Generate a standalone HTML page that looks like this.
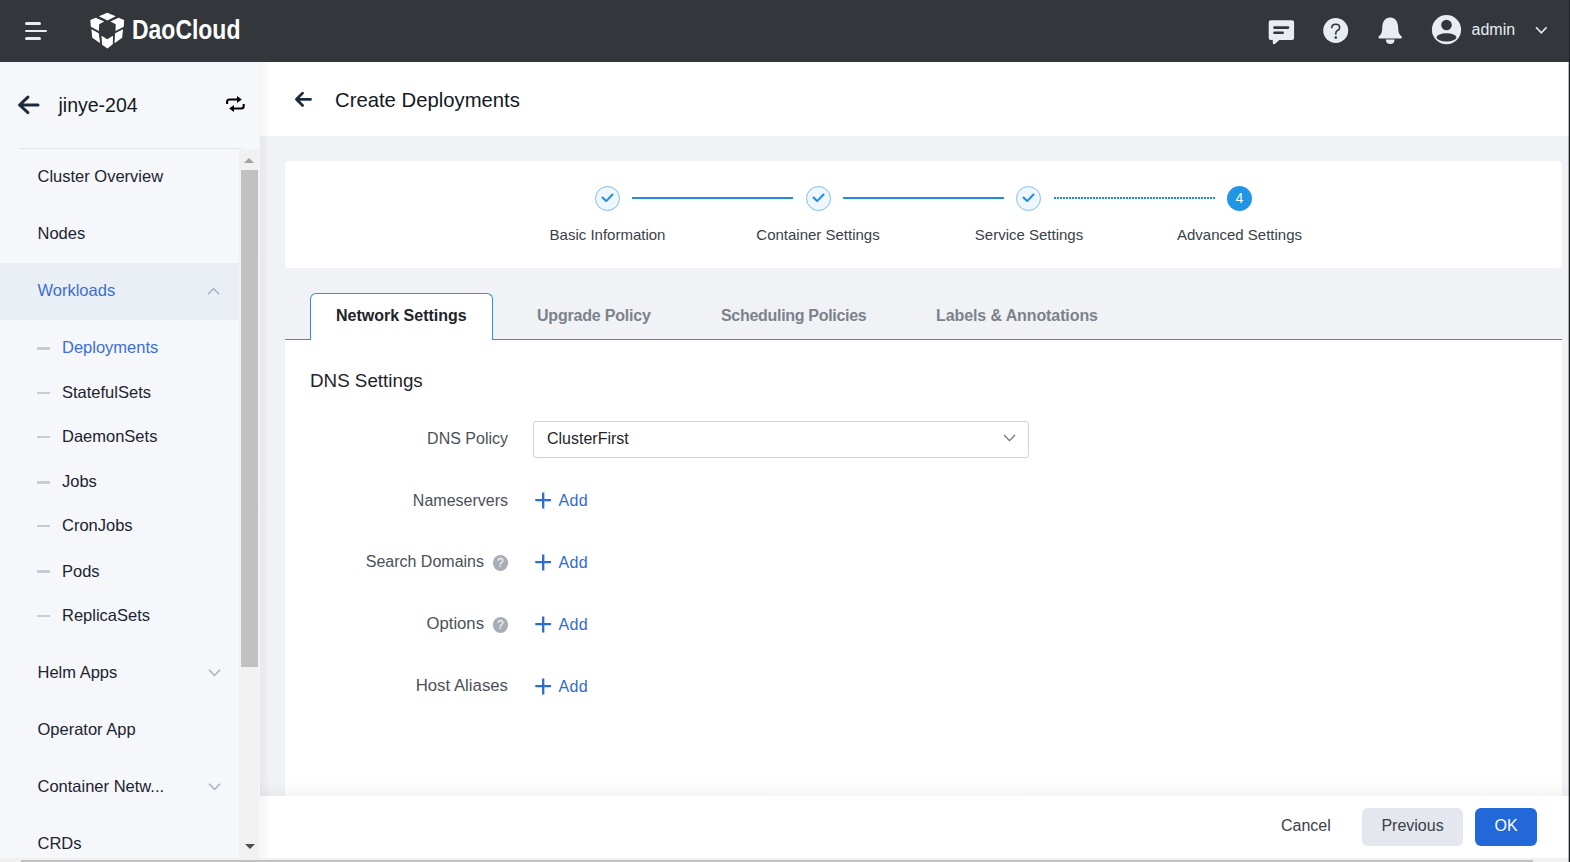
<!DOCTYPE html>
<html><head><meta charset="utf-8">
<style>
*{box-sizing:border-box;margin:0;padding:0}
html,body{width:1570px;height:862px;overflow:hidden;background:#f1f2f5;font-family:"Liberation Sans",sans-serif}
.abs{position:absolute}
.t{position:absolute;white-space:nowrap;line-height:1}
svg{position:absolute;overflow:visible}
#hdr{left:0;top:0;width:1570px;height:62px;background:#33363b}
#side{left:0;top:62px;width:260px;height:800px;background:#f6f7fa}
#mainhdr{left:260px;top:62px;width:1309px;height:74px;background:#fff}
#redge{left:1568px;top:0;width:2px;height:862px;background:#3a3d42}
#card1{left:285px;top:161px;width:1277px;height:107px;background:#fff;border-radius:4px}
#content{left:285px;top:339px;width:1277px;height:457px;background:#fff}
#footer{left:260px;top:796px;width:1309px;height:66px;background:#fff}
.hb{position:absolute;background:#e8ecf3;border-radius:2px}
.mi{font-size:16.5px;color:#1c2330}
.sub{font-size:16.5px;color:#1c2330}
.dash{position:absolute;left:37px;width:13px;height:2px;background:#c8ccd4}
.chev{position:absolute}
.step{font-size:15px;color:#3b4048}
.circ{position:absolute;width:25px;height:25px;border-radius:50%;background:#eef6fe;border:1px solid #80bff0}
.tab{font-size:16px;font-weight:bold;color:#7c828c}
.lbl{font-size:16px;color:#4b5058;text-align:right}
.add{font-size:16px;color:#2d6bd5;letter-spacing:0.3px}
.q{position:absolute;width:15.5px;height:15.5px;border-radius:50%;background:#a9adb5;color:#fff;font-size:12px;line-height:16px;text-align:center}
</style></head><body>
<div id="hdr" class="abs"></div>
<div id="side" class="abs"></div>
<div id="mainhdr" class="abs"></div>
<div id="card1" class="abs"></div>
<div id="content" class="abs"></div>
<div id="footer" class="abs"></div>

<!-- header -->
<div class="hb" style="left:25px;top:22px;width:16px;height:3px"></div>
<div class="hb" style="left:25px;top:30px;width:22px;height:2px"></div>
<div class="hb" style="left:25px;top:37px;width:16px;height:3px"></div>
<svg style="left:86px;top:10px" width="44" height="42" viewBox="0 0 903 862">
<g fill="#fff">
<polygon points="265,130 435,58 610,130 440,215"/>
<polygon points="88,205 200,160 372,238 270,290 265,432 100,345"/>
<polygon points="500,238 668,160 782,205 775,345 605,432 610,295"/>
<polygon points="110,395 262,478 290,682 130,572"/>
<polygon points="760,395 598,478 585,682 742,572"/>
<polygon points="318,530 437,600 555,530 550,705 440,790 330,712"/>
</g></svg>
<div class="t" style="left:132px;top:15.6px;font-size:27.5px;font-weight:bold;color:#fff;transform:scaleX(0.835);transform-origin:0 0">DaoCloud</div>

<!-- right header icons -->
<svg style="left:1268px;top:19px" width="27" height="26" viewBox="0 0 27 26">
<path d="M3 1.2 H24 Q26.1 1.2 26.1 3.3 V18.9 Q26.1 21 24 21 H11.4 L6.8 24.9 Q5 26 4.8 24 V21 H2.8 Q0.7 21 0.7 18.9 V3.3 Q0.7 1.2 2.8 1.2Z" fill="#e8ecf3"/>
<rect x="5.2" y="7.3" width="16.1" height="2.6" rx="1.3" fill="#33363b"/>
<rect x="5.2" y="12.4" width="10.8" height="2.6" rx="1.3" fill="#33363b"/>
</svg>
<svg style="left:1323px;top:18px" width="26" height="26" viewBox="0 0 26 26">
<circle cx="12.7" cy="12.5" r="12.5" fill="#e8ecf3"/>
<path d="M8.8 9.6 Q8.8 6.2 12.7 6.2 Q16.6 6.2 16.6 9.4 Q16.6 11.5 14.4 12.6 Q12.8 13.4 12.8 15.4 V16" fill="none" stroke="#33363b" stroke-width="1.65" stroke-linecap="round"/>
<circle cx="12.8" cy="19.6" r="1.3" fill="#33363b"/>
</svg>
<svg style="left:1378px;top:17px" width="25" height="28" viewBox="0 0 25 28">
<path d="M12.2 0.6 C6.8 0.6 4.6 5 4.3 10 L4 14 C3.8 17 1.6 18.4 0.6 19.8 Q0 21.5 1.6 21.5 H22.8 Q24.4 21.5 23.8 19.8 C22.8 18.4 20.6 17 20.4 14 L20.1 10 C19.8 5 17.6 0.6 12.2 0.6Z" fill="#e8ecf3"/>
<path d="M7.9 22.6 H16.5 Q16.5 27.1 12.2 27.1 Q7.9 27.1 7.9 22.6Z" fill="#e8ecf3"/>
</svg>
<svg style="left:1431px;top:15px" width="30" height="30" viewBox="0 0 30 30">
<circle cx="15.5" cy="14.7" r="14.6" fill="#e8ecf3"/>
<circle cx="15.5" cy="10" r="5.3" fill="#33363b"/>
<ellipse cx="15.5" cy="22.4" rx="9.9" ry="4.2" fill="#33363b"/>
</svg>
<div class="t" style="left:1471.5px;top:22px;font-size:16px;color:#e8ecf3">admin</div>
<svg style="left:1535px;top:26px" width="13" height="9" viewBox="0 0 13 9">
<path d="M1 1.2 L6.3 6.8 L11.6 1.2" fill="none" stroke="#e8ecf3" stroke-width="1.6"/>
</svg>

<!-- sidebar -->
<svg style="left:16px;top:94px" width="24" height="22" viewBox="0 0 24 22">
<path d="M11.9 3.1 L3.6 11 L11.9 18.6 M3.6 11 H22" fill="none" stroke="#1b2a3b" stroke-width="3" stroke-linecap="round" stroke-linejoin="round"/>
</svg>
<div class="t" style="left:58.5px;top:95.8px;font-size:19.5px;color:#14181f">jinye-204</div>
<svg style="left:224px;top:94px" width="24" height="20" viewBox="0 0 24 20">
<path d="M3.1 9.9 V8 Q3.1 5.5 5.6 5.5 H14" fill="none" stroke="#000" stroke-width="2.1"/>
<polygon points="13,2 17.8,5.5 13,9" fill="#000"/>
<path d="M19.7 10 V12 Q19.7 14.5 17.2 14.5 H9" fill="none" stroke="#000" stroke-width="2.1"/>
<polygon points="10,11 5.2,14.5 10,18" fill="#000"/>
</svg>
<div class="abs" style="left:19px;top:148px;width:222px;height:1px;background:#dfe2e8"></div>

<div class="t mi" style="left:37.5px;top:168.4px">Cluster Overview</div>
<div class="t mi" style="left:37.5px;top:225.4px">Nodes</div>
<div class="abs" style="left:0;top:263px;width:239px;height:57px;background:#eaeef5"></div>
<div class="t mi" style="left:37.5px;top:282.2px;color:#3b6fd6">Workloads</div>
<svg style="left:207px;top:286px" width="13" height="10" viewBox="0 0 13 10">
<path d="M1 8.2 L6.5 2.5 L12 8.2" fill="none" stroke="#a9b0bc" stroke-width="1.5"/>
</svg>

<div class="dash" style="top:347px;height:3px"></div>
<div class="t sub" style="left:62px;top:339.3px;color:#3b6fd6">Deployments</div>
<div class="dash" style="top:392px"></div>
<div class="t sub" style="left:62px;top:384px">StatefulSets</div>
<div class="dash" style="top:436px"></div>
<div class="t sub" style="left:62px;top:428.2px">DaemonSets</div>
<div class="dash" style="top:480.5px;height:3px"></div>
<div class="t sub" style="left:62px;top:473px">Jobs</div>
<div class="dash" style="top:525px"></div>
<div class="t sub" style="left:62px;top:517.4px">CronJobs</div>
<div class="dash" style="top:569.5px;height:3px"></div>
<div class="t sub" style="left:62px;top:562.6px">Pods</div>
<div class="dash" style="top:615px"></div>
<div class="t sub" style="left:62px;top:607.4px">ReplicaSets</div>

<div class="t mi" style="left:37.5px;top:664.4px">Helm Apps</div>
<svg style="left:208px;top:668px" width="13" height="10" viewBox="0 0 13 10">
<path d="M1 1.8 L6.5 7.5 L12 1.8" fill="none" stroke="#a9b0bc" stroke-width="1.5"/>
</svg>
<div class="t mi" style="left:37.5px;top:721.2px">Operator App</div>
<div class="t mi" style="left:37.5px;top:778px">Container Netw...</div>
<svg style="left:208px;top:782px" width="13" height="10" viewBox="0 0 13 10">
<path d="M1 1.8 L6.5 7.5 L12 1.8" fill="none" stroke="#a9b0bc" stroke-width="1.5"/>
</svg>
<div class="t mi" style="left:37.5px;top:835px">CRDs</div>

<!-- sidebar scrollbar -->
<div class="abs" style="left:239px;top:149px;width:20px;height:709px;background:#f1f1f1"></div>
<div class="abs" style="left:241px;top:170px;width:17px;height:497px;background:#c1c1c1"></div>
<svg style="left:244px;top:157.5px" width="10" height="6" viewBox="0 0 10 6"><polygon points="0,5 5,0 10,5" fill="#a3a3a3"/></svg>
<svg style="left:244.7px;top:843.6px" width="10" height="6" viewBox="0 0 10 6"><polygon points="0,0 10,0 5,5" fill="#505050"/></svg>

<!-- main header -->
<div class="abs" style="left:260px;top:62px;width:10px;height:800px;background:linear-gradient(to right,rgba(0,0,0,0.045),rgba(0,0,0,0))"></div>
<svg style="left:293px;top:90px" width="22" height="19" viewBox="0 0 22 19">
<path d="M9.6 3.1 L3.4 9.3 L9.6 15.5 M3.4 9.3 H17.6" fill="none" stroke="#1b2a3b" stroke-width="2.7" stroke-linecap="round" stroke-linejoin="round"/>
</svg>
<div class="t" style="left:335px;top:90.2px;font-size:20.3px;color:#14181f">Create Deployments</div>

<!-- steps -->
<div class="circ" style="left:595px;top:186px"></div>
<div class="circ" style="left:806px;top:186px"></div>
<div class="circ" style="left:1016px;top:186px"></div>
<div class="abs" style="left:1227px;top:186px;width:25px;height:25px;border-radius:50%;background:#2196e6"></div>
<div class="t" style="left:1227px;top:190.6px;width:25px;text-align:center;font-size:14px;color:#fff">4</div>
<svg style="left:595px;top:186px" width="25" height="25" viewBox="0 0 25 25"><path d="M7.5 11.6 L11.2 15.1 L17.5 8.5" fill="none" stroke="#1d8de3" stroke-width="2" stroke-linecap="round" stroke-linejoin="round"/></svg>
<svg style="left:806px;top:186px" width="25" height="25" viewBox="0 0 25 25"><path d="M7.5 11.6 L11.2 15.1 L17.5 8.5" fill="none" stroke="#1d8de3" stroke-width="2" stroke-linecap="round" stroke-linejoin="round"/></svg>
<svg style="left:1016px;top:186px" width="25" height="25" viewBox="0 0 25 25"><path d="M7.5 11.6 L11.2 15.1 L17.5 8.5" fill="none" stroke="#1d8de3" stroke-width="2" stroke-linecap="round" stroke-linejoin="round"/></svg>
<div class="abs" style="left:632px;top:197px;width:161px;height:2px;background:#1f8de6"></div>
<div class="abs" style="left:843px;top:197px;width:161px;height:2px;background:#1f8de6"></div>
<div class="abs" style="left:1054px;top:197px;width:161px;height:2px;background:repeating-linear-gradient(to right,#1f8de6 0,#1f8de6 2px,transparent 2px,transparent 3px)"></div>
<div class="t step" style="left:549px;top:227px;width:117px;text-align:center">Basic Information</div>
<div class="t step" style="left:748px;top:227px;width:140px;text-align:center">Container Settings</div>
<div class="t step" style="left:960px;top:227px;width:138px;text-align:center">Service Settings</div>
<div class="t step" style="left:1170px;top:227px;width:139px;text-align:center">Advanced Settings</div>

<!-- tabs -->
<div class="abs" style="left:285px;top:339px;width:1277px;height:1px;background:#2a93d9"></div>
<div class="abs" style="left:310px;top:293px;width:183px;height:47px;background:#fff;border:1px solid #2a93d9;border-bottom:none;border-radius:6px 6px 0 0"></div>
<div class="t" style="left:336px;top:307.9px;font-size:16px;font-weight:bold;color:#1f232a">Network Settings</div>
<div class="t tab" style="left:537px;top:307.9px;letter-spacing:-0.2px">Upgrade Policy</div>
<div class="t tab" style="left:721px;top:307.9px;letter-spacing:-0.3px">Scheduling Policies</div>
<div class="t tab" style="left:936px;top:307.9px;letter-spacing:-0.1px">Labels &amp; Annotations</div>

<!-- form -->
<div class="t" style="left:310px;top:371.6px;font-size:18.8px;color:#1f232a">DNS Settings</div>

<div class="t lbl" style="left:308px;top:430.8px;width:200px">DNS Policy</div>
<div class="abs" style="left:533px;top:421px;width:496px;height:37px;border:1px solid #cfd3dc;border-radius:3px;background:#fff"></div>
<div class="t" style="left:547px;top:430.8px;font-size:16px;color:#1f232a">ClusterFirst</div>
<svg style="left:1003px;top:433px" width="13" height="10" viewBox="0 0 13 10"><path d="M1 2 L6.5 7.6 L12 2" fill="none" stroke="#6f7580" stroke-width="1.3"/></svg>

<div class="t lbl" style="left:308px;top:492.6px;width:200px">Nameservers</div>
<div class="t lbl" style="left:284px;top:554.4px;width:200px">Search Domains</div>
<div class="q" style="left:492.5px;top:555px">?</div>
<div class="t lbl" style="left:284px;top:616px;width:200px;font-size:16.7px">Options</div>
<div class="q" style="left:492.5px;top:617px">?</div>
<div class="t lbl" style="left:308px;top:678px;width:200px;font-size:16.8px">Host Aliases</div>

<svg style="left:535px;top:492px" width="17" height="17" viewBox="0 0 17 17"><path d="M8.2 0.5 V16.5 M0.3 8.2 H16" fill="none" stroke="#2d6bd5" stroke-width="2.3"/></svg>
<div class="t add" style="left:558.5px;top:493.3px">Add</div>
<svg style="left:535px;top:554px" width="17" height="17" viewBox="0 0 17 17"><path d="M8.2 0.5 V16.5 M0.3 8.2 H16" fill="none" stroke="#2d6bd5" stroke-width="2.3"/></svg>
<div class="t add" style="left:558.5px;top:555.2px">Add</div>
<svg style="left:535px;top:616px" width="17" height="17" viewBox="0 0 17 17"><path d="M8.2 0.5 V16.5 M0.3 8.2 H16" fill="none" stroke="#2d6bd5" stroke-width="2.3"/></svg>
<div class="t add" style="left:558.5px;top:617.2px">Add</div>
<svg style="left:535px;top:678px" width="17" height="17" viewBox="0 0 17 17"><path d="M8.2 0.5 V16.5 M0.3 8.2 H16" fill="none" stroke="#2d6bd5" stroke-width="2.3"/></svg>
<div class="t add" style="left:558.5px;top:679.2px">Add</div>

<!-- footer -->
<div class="abs" style="left:260px;top:780px;width:1309px;height:16px;background:linear-gradient(to bottom,rgba(0,0,0,0),rgba(0,0,0,0.035))"></div>
<div class="t" style="left:1281px;top:818.1px;font-size:16px;color:#3b4048">Cancel</div>
<div class="abs" style="left:1362px;top:808px;width:101px;height:38px;border-radius:6px;background:#e4e7ee"></div>
<div class="t" style="left:1362px;top:818.1px;width:101px;text-align:center;font-size:16px;color:#3b4048">Previous</div>
<div class="abs" style="left:1475px;top:808px;width:62px;height:38px;border-radius:6px;background:#2268d9"></div>
<div class="t" style="left:1475px;top:818.1px;width:62px;text-align:center;font-size:16px;color:#fff">OK</div>

<div class="abs" style="left:0;top:858px;width:1569px;height:4px;background:#f1f1f1"></div>
<div class="abs" style="left:21px;top:860px;width:1512px;height:2px;background:#c1c1c1"></div>
<div class="abs" style="left:1568px;top:62px;width:1px;height:800px;background:rgba(0,0,0,0.28)"></div>
<div class="abs" style="left:1569px;top:0;width:1px;height:862px;background:#1e2228"></div>
</body></html>
